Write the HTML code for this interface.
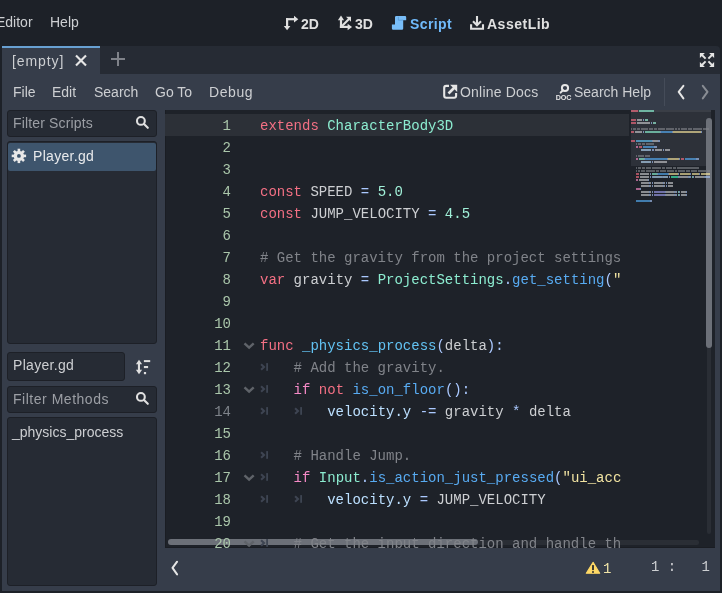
<!DOCTYPE html>
<html><head><meta charset="utf-8">
<style>
*{margin:0;padding:0;box-sizing:border-box}
html,body{width:722px;height:593px;overflow:hidden;background:#1d2128;font-family:"Liberation Sans",sans-serif;font-size:14px;color:#cdcfd2}
.t,.cl,.ln,svg{-webkit-font-smoothing:antialiased;will-change:transform}
.a{position:absolute}
svg{position:absolute;overflow:visible}
.t{position:absolute;white-space:pre;line-height:20px;height:20px}
#base{left:2px;top:74px;width:718px;height:517px;background:#363d4a}
#tabbar{left:2px;top:46px;width:718px;height:28px;background:#262b34;border-radius:0 4px 0 0}
#tab{left:2px;top:46px;width:98px;height:28px;background:#363d4a;border-top:2px solid #68a0d2}
.box{position:absolute;background:#262b34;border:1px solid #1d2027;border-radius:3px}
#code{left:165px;top:110px;width:550px;height:438px;background:#1e2229;overflow:hidden;box-shadow:inset 1px 0 #1a1d23,inset 0 -1px #1a1d23}
.mono{font-family:"Liberation Mono",monospace}
.ln{position:absolute;left:0;width:66px;text-align:right;white-space:pre;line-height:22px;height:22px;font-family:"Liberation Mono",monospace;color:#aac6aa;padding-top:1px}
.ln.g{color:#7e838a}
.cl{position:absolute;left:95px;white-space:pre;line-height:22px;height:22px;font-family:"Liberation Mono",monospace;color:#cdcfd2;padding-top:1px}
.kw{color:#f47084}.cf{color:#f58ac6}.bt{color:#8cecd0}.fn{color:#58abf2}.fd{color:#62c2f2}.nm{color:#a0f0d8}.cm{color:#808389}.st{color:#f2e4a2}.sy{color:#abc9ff}.mv{color:#bce0ff}
.w{fill:#e0e0e0}
.mm{position:absolute;height:2px;opacity:0.62}
</style></head><body>
<div class="a" id="base"></div>
<div class="a" id="tabbar"></div>
<div class="a" id="tab"></div>

<!-- top menu -->
<div class="t" style="left:-4px;top:12px">Editor</div>
<div class="t" style="left:50px;top:12px">Help</div>

<svg style="left:280px;top:12px" width="22" height="22" viewBox="0 0 22 22">
 <g fill="#e0e0e0"><rect x="6" y="6.1" width="2.2" height="9"/><rect x="6" y="6.1" width="9" height="2.2"/>
 <polygon points="3.8,14 10.4,14 7.1,18.3"/><polygon points="14,3.8 14,10.6 18.3,7.2"/></g>
</svg>
<div class="t" style="left:301px;top:14px;font-weight:bold;color:#e0e0e0">2D</div>

<svg style="left:335px;top:12px" width="22" height="22" viewBox="0 0 22 22">
 <g fill="#e0e0e0"><rect x="4.9" y="7" width="2.2" height="9"/><rect x="4.9" y="13.8" width="9" height="2.2"/>
 <polygon points="2.9,8.2 9.1,8.2 6,3.6"/><polygon points="12.6,11.8 12.6,18.2 17.1,15"/>
 <polygon points="11,4.8 16,4.8 16,9.8"/></g>
 <line x1="6.5" y1="14.5" x2="14" y2="7" stroke="#e0e0e0" stroke-width="2.1"/>
</svg>
<div class="t" style="left:355px;top:14px;font-weight:bold;color:#e0e0e0">3D</div>

<svg style="left:388px;top:12px" width="22" height="22" viewBox="0 0 22 22">
 <path d="M8.2,4.1 H17 Q18.2,4.1 18.2,5.3 V8.2 H15.2 V16.6 Q15.2,17.8 14,17.8 H5.1 Q3.9,17.8 3.9,16.6 V12.6 H7 V5.3 Q7,4.1 8.2,4.1 Z" fill="#78bdf8"/>
 <path d="M10.4,4.8 V8.2 H15" stroke="#5a9ad6" stroke-width="0.8" fill="none"/>
</svg>
<div class="t" style="left:410px;top:14px;font-weight:bold;color:#70bafa;letter-spacing:0.4px">Script</div>

<svg style="left:466px;top:12px" width="22" height="22" viewBox="0 0 22 22">
 <g stroke="#e0e0e0" stroke-width="2.1" fill="none"><line x1="11" y1="4" x2="11" y2="13"/><polyline points="7,9.3 11,13.3 15,9.3"/>
 <polyline points="5.1,12.2 5.1,16.8 17,16.8 17,12.2"/></g>
</svg>
<div class="t" style="left:487px;top:14px;font-weight:bold;color:#e0e0e0;letter-spacing:0.5px">AssetLib</div>

<!-- tab -->
<div class="t" style="left:12px;top:51px;letter-spacing:0.9px">[empty]</div>
<svg style="left:70px;top:50px" width="22" height="22" viewBox="0 0 22 22">
 <g stroke="#e6e6e6" stroke-width="2.1"><line x1="6" y1="5.5" x2="16" y2="15.5"/><line x1="16" y1="5.5" x2="6" y2="15.5"/></g>
</svg>
<svg style="left:107px;top:48px" width="22" height="22" viewBox="0 0 22 22">
 <g fill="#7f8289"><rect x="4" y="10" width="14" height="2"/><rect x="10" y="4" width="2" height="14"/></g>
</svg>
<svg style="left:696px;top:49px" width="22" height="22" viewBox="0 0 22 22">
 <g fill="#e6e6e6"><polygon points="3.9,3.9 8.9,3.9 3.9,8.9"/><polygon points="18.1,3.9 13.1,3.9 18.1,8.9"/>
 <polygon points="3.9,18.1 8.9,18.1 3.9,13.1"/><polygon points="18.1,18.1 13.1,18.1 18.1,13.1"/></g>
 <g stroke="#e6e6e6" stroke-width="2"><line x1="5" y1="5" x2="9.6" y2="9.6"/><line x1="17" y1="5" x2="12.4" y2="9.6"/><line x1="5" y1="17" x2="9.6" y2="12.4"/><line x1="17" y1="17" x2="12.4" y2="12.4"/></g>
</svg>

<!-- menu row -->
<div class="t" style="left:13px;top:82px">File</div>
<div class="t" style="left:52px;top:82px">Edit</div>
<div class="t" style="left:94px;top:82px">Search</div>
<div class="t" style="left:155px;top:82px">Go To</div>
<div class="t" style="left:209px;top:82px;letter-spacing:0.6px">Debug</div>
<svg style="left:439px;top:80px" width="22" height="22" viewBox="0 0 22 22">
 <path d="M10,5.9 H7.2 Q5.2,5.9 5.2,7.9 V15.8 Q5.2,17.8 7.2,17.8 H15.1 Q17.1,17.8 17.1,15.8 V13" stroke="#e6e6e6" stroke-width="2.1" fill="none"/>
 <polygon points="11.1,4.8 18.2,4.8 18.2,11.9" fill="#e6e6e6"/>
 <line x1="9.5" y1="13.5" x2="15" y2="8" stroke="#e6e6e6" stroke-width="2.6"/>
</svg>
<div class="t" style="left:460px;top:82px;letter-spacing:0.2px">Online Docs</div>
<svg style="left:552px;top:80px;will-change:transform" width="22" height="22" viewBox="0 0 22 22">
 <circle cx="13" cy="8" r="3.1" stroke="#e6e6e6" stroke-width="2" fill="none"/>
 <line x1="8.6" y1="12.6" x2="10.9" y2="10.3" stroke="#e6e6e6" stroke-width="2" stroke-linecap="round"/>
 <text x="11.5" y="20" text-anchor="middle" font-family="Liberation Sans" font-weight="bold" font-size="7.2" fill="#e6e6e6" letter-spacing="-0.2">DOC</text>
</svg>
<div class="t" style="left:574px;top:82px">Search Help</div>
<div class="a" style="left:664px;top:78px;width:1px;height:28px;background:#454c59"></div>
<svg style="left:670px;top:80px" width="46" height="24" viewBox="0 0 46 24">
 <polyline points="13.4,5.8 8.7,11.9 13.4,18.4" stroke="#e6e6e6" stroke-width="2" fill="none" stroke-linecap="round" stroke-linejoin="round"/>
 <polyline points="32.8,5.8 37.5,11.9 32.8,18.4" stroke="#888c93" stroke-width="2" fill="none" stroke-linecap="round" stroke-linejoin="round"/>
</svg>

<!-- left panel -->
<div class="box" style="left:7px;top:110px;width:150px;height:27px"></div>
<div class="t" style="left:13px;top:113px;color:#9c9fa5;letter-spacing:0.15px">Filter Scripts</div>
<svg style="left:132px;top:112px" width="22" height="22" viewBox="0 0 22 22">
 <circle cx="8.9" cy="8.9" r="3.9" stroke="#e0e0e0" stroke-width="2.1" fill="none"/>
 <line x1="12" y1="12" x2="15.8" y2="15.8" stroke="#e0e0e0" stroke-width="2.1" stroke-linecap="round"/>
</svg>
<div class="box" style="left:7px;top:141px;width:150px;height:203px"></div>
<div class="a" style="left:8px;top:143px;width:148px;height:28px;background:#3e556d;border-radius:2px"></div>
<svg style="left:8px;top:145px" width="22" height="22" viewBox="0 0 22 22">
 <g transform="translate(10.9,10.9)" fill="#e8e8e8">
  <circle r="5.2"/>
  <g id="tooth"><rect x="-1.3" y="-7.2" width="2.6" height="3"/></g>
  <rect x="-1.3" y="-7.2" width="2.6" height="3" transform="rotate(45)"/>
  <rect x="-1.3" y="-7.2" width="2.6" height="3" transform="rotate(90)"/>
  <rect x="-1.3" y="-7.2" width="2.6" height="3" transform="rotate(135)"/>
  <rect x="-1.3" y="-7.2" width="2.6" height="3" transform="rotate(180)"/>
  <rect x="-1.3" y="-7.2" width="2.6" height="3" transform="rotate(225)"/>
  <rect x="-1.3" y="-7.2" width="2.6" height="3" transform="rotate(270)"/>
  <rect x="-1.3" y="-7.2" width="2.6" height="3" transform="rotate(315)"/>
  <circle r="1.9" fill="#3c546c"/>
 </g>
</svg>
<div class="t" style="left:33px;top:146px;color:#e8eaec;letter-spacing:0.3px">Player.gd</div>

<div class="box" style="left:7px;top:352px;width:118px;height:29px"></div>
<div class="t" style="left:13px;top:355px;letter-spacing:0.3px">Player.gd</div>
<svg style="left:132px;top:356px" width="22" height="22" viewBox="0 0 22 22">
 <g fill="#e0e0e0"><rect x="5.9" y="7" width="2.1" height="8"/><polygon points="3.9,8.2 10.1,8.2 7,3.7"/><polygon points="3.9,13.8 10.1,13.8 7,18.3"/>
 <rect x="11.9" y="4.1" width="6.3" height="2"/><rect x="11.9" y="10" width="4.2" height="2.1"/><rect x="11.9" y="16" width="2.2" height="2.2"/></g>
</svg>
<div class="box" style="left:7px;top:386px;width:150px;height:27px"></div>
<div class="t" style="left:13px;top:389px;color:#9c9fa5;letter-spacing:0.52px">Filter Methods</div>
<svg style="left:132px;top:388px" width="22" height="22" viewBox="0 0 22 22">
 <circle cx="8.9" cy="8.9" r="3.9" stroke="#e0e0e0" stroke-width="2.1" fill="none"/>
 <line x1="12" y1="12" x2="15.8" y2="15.8" stroke="#e0e0e0" stroke-width="2.1" stroke-linecap="round"/>
</svg>
<div class="box" style="left:7px;top:417px;width:150px;height:169px"></div>
<div class="t" style="left:12px;top:422px">_physics_process</div>

<!-- code -->
<div class="a" id="code">
  <div class="a" style="left:0;top:4px;width:464px;height:22px;background:#2c3037"></div>
  <div class="a" style="left:466px;top:0;width:80px;height:56px;background:#2d3139"></div>
  <div class="a" style="left:466px;top:0;width:80px;height:2px;background:#3a3e46"></div>
  <div class="a" style="left:542px;top:8px;width:4px;height:416px;background:#2a2e35;border-radius:2px"></div>
  <div class="a" style="left:541px;top:8px;width:6px;height:230px;background:#6c7078;border-radius:3px"></div>
  <div class="a" style="left:3px;top:430px;width:531px;height:5px;background:#2a2e35;border-radius:2px"></div>
  <div class="a" style="left:3px;top:429px;width:310px;height:6px;background:#6c7078;border-radius:3px"></div>
  <div class="ln" style="top:4px">1</div>
<div class="ln" style="top:26px">2</div>
<div class="ln" style="top:48px">3</div>
<div class="ln" style="top:70px">4</div>
<div class="ln" style="top:92px">5</div>
<div class="ln" style="top:114px">6</div>
<div class="ln" style="top:136px">7</div>
<div class="ln" style="top:158px">8</div>
<div class="ln" style="top:180px">9</div>
<div class="ln" style="top:202px">10</div>
<div class="ln" style="top:224px">11</div>
<div class="ln" style="top:246px">12</div>
<div class="ln" style="top:268px">13</div>
<div class="ln g" style="top:290px">14</div>
<div class="ln" style="top:312px">15</div>
<div class="ln" style="top:334px">16</div>
<div class="ln" style="top:356px">17</div>
<div class="ln" style="top:378px">18</div>
<div class="ln" style="top:400px">19</div>
<div class="ln" style="top:422px">20</div>
  <svg style="left:0;top:224px" width="100" height="22" viewBox="0 0 100 22"><polyline points="79.5,9.3 84.1,13.7 88.7,9.3" stroke="#5f6369" stroke-width="2.4" fill="none"/></svg>
<svg style="left:0;top:268px" width="100" height="22" viewBox="0 0 100 22"><polyline points="79.5,9.3 84.1,13.7 88.7,9.3" stroke="#5f6369" stroke-width="2.4" fill="none"/></svg>
<svg style="left:0;top:356px" width="100" height="22" viewBox="0 0 100 22"><polyline points="79.5,9.3 84.1,13.7 88.7,9.3" stroke="#5f6369" stroke-width="2.4" fill="none"/></svg>
<svg style="left:0;top:422px" width="100" height="22" viewBox="0 0 100 22"><polyline points="79.5,9.3 84.1,13.7 88.7,9.3" stroke="#5f6369" stroke-width="2.4" fill="none"/></svg>
<svg style="left:95px;top:246px" width="10" height="22" viewBox="0 0 10 22"><polyline points="1.1,8.3 4,11 1.1,13.7" stroke="#3e4552" stroke-width="2.1" fill="none"/><rect x="6.2" y="7.1" width="1.8" height="7.7" fill="#3e4552"/></svg>
<svg style="left:95px;top:268px" width="10" height="22" viewBox="0 0 10 22"><polyline points="1.1,8.3 4,11 1.1,13.7" stroke="#3e4552" stroke-width="2.1" fill="none"/><rect x="6.2" y="7.1" width="1.8" height="7.7" fill="#3e4552"/></svg>
<svg style="left:95px;top:290px" width="10" height="22" viewBox="0 0 10 22"><polyline points="1.1,8.3 4,11 1.1,13.7" stroke="#3e4552" stroke-width="2.1" fill="none"/><rect x="6.2" y="7.1" width="1.8" height="7.7" fill="#3e4552"/></svg>
<svg style="left:95px;top:334px" width="10" height="22" viewBox="0 0 10 22"><polyline points="1.1,8.3 4,11 1.1,13.7" stroke="#3e4552" stroke-width="2.1" fill="none"/><rect x="6.2" y="7.1" width="1.8" height="7.7" fill="#3e4552"/></svg>
<svg style="left:95px;top:356px" width="10" height="22" viewBox="0 0 10 22"><polyline points="1.1,8.3 4,11 1.1,13.7" stroke="#3e4552" stroke-width="2.1" fill="none"/><rect x="6.2" y="7.1" width="1.8" height="7.7" fill="#3e4552"/></svg>
<svg style="left:95px;top:378px" width="10" height="22" viewBox="0 0 10 22"><polyline points="1.1,8.3 4,11 1.1,13.7" stroke="#3e4552" stroke-width="2.1" fill="none"/><rect x="6.2" y="7.1" width="1.8" height="7.7" fill="#3e4552"/></svg>
<svg style="left:95px;top:422px" width="10" height="22" viewBox="0 0 10 22"><polyline points="1.1,8.3 4,11 1.1,13.7" stroke="#3e4552" stroke-width="2.1" fill="none"/><rect x="6.2" y="7.1" width="1.8" height="7.7" fill="#3e4552"/></svg>
<svg style="left:129px;top:290px" width="10" height="22" viewBox="0 0 10 22"><polyline points="1.1,8.3 4,11 1.1,13.7" stroke="#3e4552" stroke-width="2.1" fill="none"/><rect x="6.2" y="7.1" width="1.8" height="7.7" fill="#3e4552"/></svg>
<svg style="left:129px;top:378px" width="10" height="22" viewBox="0 0 10 22"><polyline points="1.1,8.3 4,11 1.1,13.7" stroke="#3e4552" stroke-width="2.1" fill="none"/><rect x="6.2" y="7.1" width="1.8" height="7.7" fill="#3e4552"/></svg>
  <div class="a" style="left:0;top:0;width:457px;height:438px;overflow:hidden">
  <div class="cl" style="top:4px"><span class="kw">extends</span> <span class="bt">CharacterBody3D</span></div>
<div class="cl" style="top:26px"></div>
<div class="cl" style="top:48px"></div>
<div class="cl" style="top:70px"><span class="kw">const</span> SPEED <span class="sy">=</span> <span class="nm">5.0</span></div>
<div class="cl" style="top:92px"><span class="kw">const</span> JUMP_VELOCITY <span class="sy">=</span> <span class="nm">4.5</span></div>
<div class="cl" style="top:114px"></div>
<div class="cl" style="top:136px"><span class="cm"># Get the gravity from the project settings to be synced with RigidBody nodes.</span></div>
<div class="cl" style="top:158px"><span class="kw">var</span> gravity <span class="sy">=</span> <span class="bt">ProjectSettings</span><span class="sy">.</span><span class="fn">get_setting</span><span class="sy">(</span><span class="st">&quot;physics/3d/default_gravity&quot;</span><span class="sy">)</span></div>
<div class="cl" style="top:180px"></div>
<div class="cl" style="top:202px"></div>
<div class="cl" style="top:224px"><span class="kw">func</span> <span class="fd">_physics_process</span><span class="sy">(</span>delta<span class="sy">):</span></div>
<div class="cl" style="top:246px">    <span class="cm"># Add the gravity.</span></div>
<div class="cl" style="top:268px">    <span class="cf">if</span> <span class="kw">not</span> <span class="fn">is_on_floor</span><span class="sy">():</span></div>
<div class="cl" style="top:290px">        <span class="mv">velocity.y</span> <span class="sy">-=</span> gravity <span class="sy">*</span> delta</div>
<div class="cl" style="top:312px"></div>
<div class="cl" style="top:334px">    <span class="cm"># Handle Jump.</span></div>
<div class="cl" style="top:356px">    <span class="cf">if</span> <span class="bt">Input</span><span class="sy">.</span><span class="fn">is_action_just_pressed</span><span class="sy">(</span><span class="st">&quot;ui_accept&quot;</span><span class="sy">)</span> <span class="kw">and</span> <span class="fn">is_on_floor</span><span class="sy">():</span></div>
<div class="cl" style="top:378px">        <span class="mv">velocity.y</span> <span class="sy">=</span> JUMP_VELOCITY</div>
<div class="cl" style="top:400px"></div>
<div class="cl" style="top:422px">    <span class="cm"># Get the input direction and handle the movement/deceleration.</span></div>
  </div>
  <div class="mm" style="left:466px;top:0px;width:7px;background:#ff7085"></div>
<div class="mm" style="left:474px;top:0px;width:15px;background:#8fffdb"></div>
<div class="mm" style="left:466px;top:9px;width:5px;background:#ff7085"></div>
<div class="mm" style="left:472px;top:9px;width:5px;background:#cdcfd2"></div>
<div class="mm" style="left:478px;top:9px;width:1px;background:#abc9ff"></div>
<div class="mm" style="left:480px;top:9px;width:3px;background:#a1ffe0"></div>
<div class="mm" style="left:466px;top:12px;width:5px;background:#ff7085"></div>
<div class="mm" style="left:472px;top:12px;width:13px;background:#cdcfd2"></div>
<div class="mm" style="left:486px;top:12px;width:1px;background:#abc9ff"></div>
<div class="mm" style="left:488px;top:12px;width:3px;background:#a1ffe0"></div>
<div class="mm" style="left:466px;top:18px;width:1px;background:#808389"></div>
<div class="mm" style="left:468px;top:18px;width:3px;background:#808389"></div>
<div class="mm" style="left:472px;top:18px;width:3px;background:#808389"></div>
<div class="mm" style="left:476px;top:18px;width:7px;background:#808389"></div>
<div class="mm" style="left:484px;top:18px;width:4px;background:#808389"></div>
<div class="mm" style="left:489px;top:18px;width:3px;background:#808389"></div>
<div class="mm" style="left:493px;top:18px;width:7px;background:#808389"></div>
<div class="mm" style="left:501px;top:18px;width:8px;background:#808389"></div>
<div class="mm" style="left:510px;top:18px;width:2px;background:#808389"></div>
<div class="mm" style="left:513px;top:18px;width:2px;background:#808389"></div>
<div class="mm" style="left:516px;top:18px;width:6px;background:#808389"></div>
<div class="mm" style="left:523px;top:18px;width:4px;background:#808389"></div>
<div class="mm" style="left:528px;top:18px;width:9px;background:#808389"></div>
<div class="mm" style="left:538px;top:18px;width:6px;background:#808389"></div>
<div class="mm" style="left:466px;top:21px;width:3px;background:#ff7085"></div>
<div class="mm" style="left:470px;top:21px;width:7px;background:#cdcfd2"></div>
<div class="mm" style="left:478px;top:21px;width:1px;background:#abc9ff"></div>
<div class="mm" style="left:480px;top:21px;width:15px;background:#8fffdb"></div>
<div class="mm" style="left:495px;top:21px;width:1px;background:#abc9ff"></div>
<div class="mm" style="left:496px;top:21px;width:11px;background:#57b3ff"></div>
<div class="mm" style="left:507px;top:21px;width:1px;background:#abc9ff"></div>
<div class="mm" style="left:508px;top:21px;width:28px;background:#ffeda1"></div>
<div class="mm" style="left:536px;top:21px;width:1px;background:#abc9ff"></div>
<div class="mm" style="left:466px;top:30px;width:4px;background:#ff7085"></div>
<div class="mm" style="left:471px;top:30px;width:16px;background:#66ccff"></div>
<div class="mm" style="left:487px;top:30px;width:1px;background:#abc9ff"></div>
<div class="mm" style="left:488px;top:30px;width:5px;background:#cdcfd2"></div>
<div class="mm" style="left:493px;top:30px;width:2px;background:#abc9ff"></div>
<div class="mm" style="left:471px;top:33px;width:1px;background:#808389"></div>
<div class="mm" style="left:473px;top:33px;width:3px;background:#808389"></div>
<div class="mm" style="left:477px;top:33px;width:3px;background:#808389"></div>
<div class="mm" style="left:481px;top:33px;width:8px;background:#808389"></div>
<div class="mm" style="left:471px;top:36px;width:2px;background:#ff8ccc"></div>
<div class="mm" style="left:474px;top:36px;width:3px;background:#ff7085"></div>
<div class="mm" style="left:478px;top:36px;width:11px;background:#57b3ff"></div>
<div class="mm" style="left:489px;top:36px;width:3px;background:#abc9ff"></div>
<div class="mm" style="left:476px;top:39px;width:10px;background:#bce0ff"></div>
<div class="mm" style="left:487px;top:39px;width:2px;background:#abc9ff"></div>
<div class="mm" style="left:490px;top:39px;width:7px;background:#cdcfd2"></div>
<div class="mm" style="left:498px;top:39px;width:1px;background:#abc9ff"></div>
<div class="mm" style="left:500px;top:39px;width:5px;background:#cdcfd2"></div>
<div class="mm" style="left:471px;top:45px;width:1px;background:#808389"></div>
<div class="mm" style="left:473px;top:45px;width:6px;background:#808389"></div>
<div class="mm" style="left:480px;top:45px;width:5px;background:#808389"></div>
<div class="mm" style="left:471px;top:48px;width:2px;background:#ff8ccc"></div>
<div class="mm" style="left:474px;top:48px;width:5px;background:#8fffdb"></div>
<div class="mm" style="left:479px;top:48px;width:1px;background:#abc9ff"></div>
<div class="mm" style="left:480px;top:48px;width:22px;background:#57b3ff"></div>
<div class="mm" style="left:502px;top:48px;width:1px;background:#abc9ff"></div>
<div class="mm" style="left:503px;top:48px;width:11px;background:#ffeda1"></div>
<div class="mm" style="left:514px;top:48px;width:1px;background:#abc9ff"></div>
<div class="mm" style="left:516px;top:48px;width:3px;background:#ff7085"></div>
<div class="mm" style="left:520px;top:48px;width:11px;background:#57b3ff"></div>
<div class="mm" style="left:531px;top:48px;width:3px;background:#abc9ff"></div>
<div class="mm" style="left:476px;top:51px;width:10px;background:#bce0ff"></div>
<div class="mm" style="left:487px;top:51px;width:1px;background:#abc9ff"></div>
<div class="mm" style="left:489px;top:51px;width:13px;background:#cdcfd2"></div>
<div class="mm" style="left:471px;top:57px;width:1px;background:#808389"></div>
<div class="mm" style="left:473px;top:57px;width:3px;background:#808389"></div>
<div class="mm" style="left:477px;top:57px;width:3px;background:#808389"></div>
<div class="mm" style="left:481px;top:57px;width:5px;background:#808389"></div>
<div class="mm" style="left:487px;top:57px;width:9px;background:#808389"></div>
<div class="mm" style="left:497px;top:57px;width:3px;background:#808389"></div>
<div class="mm" style="left:501px;top:57px;width:6px;background:#808389"></div>
<div class="mm" style="left:508px;top:57px;width:3px;background:#808389"></div>
<div class="mm" style="left:512px;top:57px;width:22px;background:#808389"></div>
<div class="mm" style="left:471px;top:60px;width:1px;background:#808389"></div>
<div class="mm" style="left:473px;top:60px;width:2px;background:#808389"></div>
<div class="mm" style="left:476px;top:60px;width:4px;background:#808389"></div>
<div class="mm" style="left:481px;top:60px;width:9px;background:#808389"></div>
<div class="mm" style="left:491px;top:60px;width:3px;background:#808389"></div>
<div class="mm" style="left:495px;top:60px;width:6px;background:#808389"></div>
<div class="mm" style="left:502px;top:60px;width:7px;background:#808389"></div>
<div class="mm" style="left:510px;top:60px;width:2px;background:#808389"></div>
<div class="mm" style="left:513px;top:60px;width:7px;background:#808389"></div>
<div class="mm" style="left:521px;top:60px;width:4px;background:#808389"></div>
<div class="mm" style="left:526px;top:60px;width:6px;background:#808389"></div>
<div class="mm" style="left:533px;top:60px;width:8px;background:#808389"></div>
<div class="mm" style="left:542px;top:60px;width:3px;background:#808389"></div>
<div class="mm" style="left:471px;top:63px;width:3px;background:#ff7085"></div>
<div class="mm" style="left:475px;top:63px;width:9px;background:#cdcfd2"></div>
<div class="mm" style="left:485px;top:63px;width:1px;background:#abc9ff"></div>
<div class="mm" style="left:487px;top:63px;width:5px;background:#8fffdb"></div>
<div class="mm" style="left:492px;top:63px;width:1px;background:#abc9ff"></div>
<div class="mm" style="left:493px;top:63px;width:10px;background:#57b3ff"></div>
<div class="mm" style="left:503px;top:63px;width:1px;background:#abc9ff"></div>
<div class="mm" style="left:504px;top:63px;width:9px;background:#ffeda1"></div>
<div class="mm" style="left:513px;top:63px;width:1px;background:#abc9ff"></div>
<div class="mm" style="left:515px;top:63px;width:10px;background:#ffeda1"></div>
<div class="mm" style="left:525px;top:63px;width:1px;background:#abc9ff"></div>
<div class="mm" style="left:527px;top:63px;width:7px;background:#ffeda1"></div>
<div class="mm" style="left:534px;top:63px;width:1px;background:#abc9ff"></div>
<div class="mm" style="left:536px;top:63px;width:9px;background:#ffeda1"></div>
<div class="mm" style="left:471px;top:66px;width:3px;background:#ff7085"></div>
<div class="mm" style="left:475px;top:66px;width:9px;background:#cdcfd2"></div>
<div class="mm" style="left:485px;top:66px;width:1px;background:#abc9ff"></div>
<div class="mm" style="left:487px;top:66px;width:1px;background:#abc9ff"></div>
<div class="mm" style="left:488px;top:66px;width:9px;background:#bce0ff"></div>
<div class="mm" style="left:497px;top:66px;width:1px;background:#abc9ff"></div>
<div class="mm" style="left:498px;top:66px;width:5px;background:#bce0ff"></div>
<div class="mm" style="left:504px;top:66px;width:1px;background:#abc9ff"></div>
<div class="mm" style="left:506px;top:66px;width:7px;background:#42ffc2"></div>
<div class="mm" style="left:513px;top:66px;width:1px;background:#abc9ff"></div>
<div class="mm" style="left:514px;top:66px;width:9px;background:#cdcfd2"></div>
<div class="mm" style="left:523px;top:66px;width:1px;background:#abc9ff"></div>
<div class="mm" style="left:524px;top:66px;width:1px;background:#bce0ff"></div>
<div class="mm" style="left:525px;top:66px;width:1px;background:#abc9ff"></div>
<div class="mm" style="left:527px;top:66px;width:1px;background:#a1ffe0"></div>
<div class="mm" style="left:528px;top:66px;width:1px;background:#abc9ff"></div>
<div class="mm" style="left:530px;top:66px;width:9px;background:#cdcfd2"></div>
<div class="mm" style="left:539px;top:66px;width:1px;background:#abc9ff"></div>
<div class="mm" style="left:540px;top:66px;width:1px;background:#bce0ff"></div>
<div class="mm" style="left:541px;top:66px;width:4px;background:#abc9ff"></div>
<div class="mm" style="left:471px;top:69px;width:2px;background:#ff8ccc"></div>
<div class="mm" style="left:474px;top:69px;width:9px;background:#cdcfd2"></div>
<div class="mm" style="left:483px;top:69px;width:1px;background:#abc9ff"></div>
<div class="mm" style="left:476px;top:72px;width:8px;background:#cdcfd2"></div>
<div class="mm" style="left:484px;top:72px;width:1px;background:#abc9ff"></div>
<div class="mm" style="left:485px;top:72px;width:1px;background:#cdcfd2"></div>
<div class="mm" style="left:487px;top:72px;width:1px;background:#abc9ff"></div>
<div class="mm" style="left:489px;top:72px;width:9px;background:#cdcfd2"></div>
<div class="mm" style="left:498px;top:72px;width:1px;background:#abc9ff"></div>
<div class="mm" style="left:499px;top:72px;width:1px;background:#cdcfd2"></div>
<div class="mm" style="left:501px;top:72px;width:1px;background:#abc9ff"></div>
<div class="mm" style="left:503px;top:72px;width:5px;background:#cdcfd2"></div>
<div class="mm" style="left:476px;top:75px;width:8px;background:#cdcfd2"></div>
<div class="mm" style="left:484px;top:75px;width:1px;background:#abc9ff"></div>
<div class="mm" style="left:485px;top:75px;width:1px;background:#cdcfd2"></div>
<div class="mm" style="left:487px;top:75px;width:1px;background:#abc9ff"></div>
<div class="mm" style="left:489px;top:75px;width:9px;background:#cdcfd2"></div>
<div class="mm" style="left:498px;top:75px;width:1px;background:#abc9ff"></div>
<div class="mm" style="left:499px;top:75px;width:1px;background:#cdcfd2"></div>
<div class="mm" style="left:501px;top:75px;width:1px;background:#abc9ff"></div>
<div class="mm" style="left:503px;top:75px;width:5px;background:#cdcfd2"></div>
<div class="mm" style="left:471px;top:78px;width:4px;background:#ff8ccc"></div>
<div class="mm" style="left:475px;top:78px;width:1px;background:#abc9ff"></div>
<div class="mm" style="left:476px;top:81px;width:8px;background:#cdcfd2"></div>
<div class="mm" style="left:484px;top:81px;width:1px;background:#abc9ff"></div>
<div class="mm" style="left:485px;top:81px;width:1px;background:#cdcfd2"></div>
<div class="mm" style="left:487px;top:81px;width:1px;background:#abc9ff"></div>
<div class="mm" style="left:489px;top:81px;width:11px;background:#a3a3f5"></div>
<div class="mm" style="left:500px;top:81px;width:1px;background:#abc9ff"></div>
<div class="mm" style="left:501px;top:81px;width:8px;background:#cdcfd2"></div>
<div class="mm" style="left:509px;top:81px;width:1px;background:#abc9ff"></div>
<div class="mm" style="left:510px;top:81px;width:1px;background:#cdcfd2"></div>
<div class="mm" style="left:511px;top:81px;width:1px;background:#abc9ff"></div>
<div class="mm" style="left:513px;top:81px;width:1px;background:#a1ffe0"></div>
<div class="mm" style="left:514px;top:81px;width:1px;background:#abc9ff"></div>
<div class="mm" style="left:516px;top:81px;width:5px;background:#cdcfd2"></div>
<div class="mm" style="left:521px;top:81px;width:1px;background:#abc9ff"></div>
<div class="mm" style="left:476px;top:84px;width:8px;background:#cdcfd2"></div>
<div class="mm" style="left:484px;top:84px;width:1px;background:#abc9ff"></div>
<div class="mm" style="left:485px;top:84px;width:1px;background:#cdcfd2"></div>
<div class="mm" style="left:487px;top:84px;width:1px;background:#abc9ff"></div>
<div class="mm" style="left:489px;top:84px;width:11px;background:#a3a3f5"></div>
<div class="mm" style="left:500px;top:84px;width:1px;background:#abc9ff"></div>
<div class="mm" style="left:501px;top:84px;width:8px;background:#cdcfd2"></div>
<div class="mm" style="left:509px;top:84px;width:1px;background:#abc9ff"></div>
<div class="mm" style="left:510px;top:84px;width:1px;background:#cdcfd2"></div>
<div class="mm" style="left:511px;top:84px;width:1px;background:#abc9ff"></div>
<div class="mm" style="left:513px;top:84px;width:1px;background:#a1ffe0"></div>
<div class="mm" style="left:514px;top:84px;width:1px;background:#abc9ff"></div>
<div class="mm" style="left:516px;top:84px;width:5px;background:#cdcfd2"></div>
<div class="mm" style="left:521px;top:84px;width:1px;background:#abc9ff"></div>
<div class="mm" style="left:471px;top:90px;width:14px;background:#57b3ff"></div>
<div class="mm" style="left:485px;top:90px;width:2px;background:#abc9ff"></div>
</div>

<!-- status -->
<svg style="left:166px;top:556px" width="20" height="24" viewBox="0 0 20 24">
 <polyline points="11.1,5.7 6.5,11.9 11.1,18.4" stroke="#e6e6e6" stroke-width="2" fill="none" stroke-linecap="round" stroke-linejoin="round"/>
</svg>
<svg style="left:582px;top:555px" width="22" height="25" viewBox="0 0 22 25">
 <polygon points="11.1,7.4 4.3,18.3 17.7,18.3" fill="#ffd966" stroke="#ffd966" stroke-width="1.1" stroke-linejoin="round"/>
 <rect x="10.1" y="10.1" width="1.8" height="5" fill="#2a2a2a"/><rect x="10.1" y="16.2" width="1.8" height="1.6" fill="#2a2a2a"/>
</svg>
<div class="t mono" style="left:603px;top:559px;color:#f0e4a8">1</div>
<div class="t mono" style="left:651px;top:557px">1 :   1</div>
</body></html>
